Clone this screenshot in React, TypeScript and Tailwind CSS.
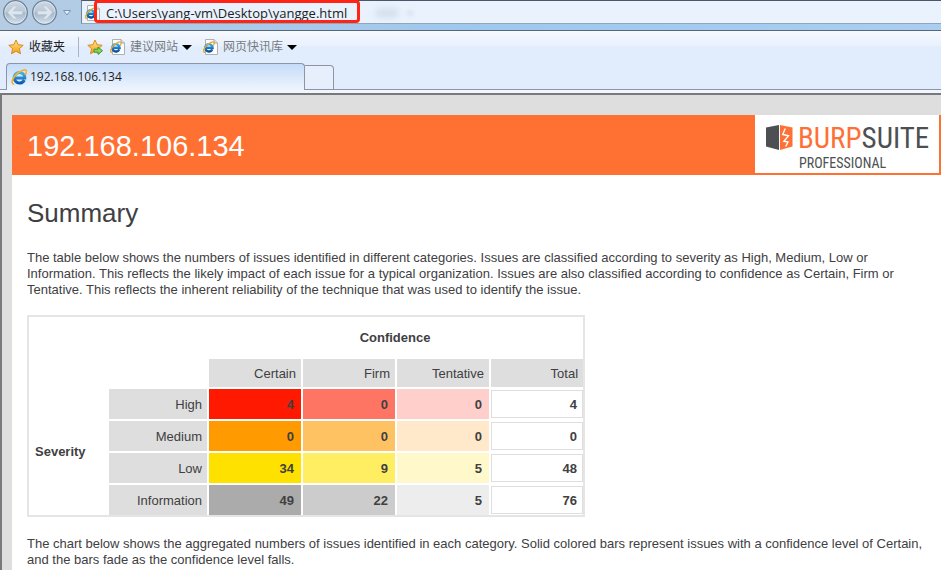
import type { ReactNode } from "react";

const ui = "font-['Open_Sans','Noto_Sans_CJK_SC',sans-serif]";

function IeGlyph({ size, id }: { size: number; id: string }) {
  return (
    <svg width={size} height={size} viewBox="0 0 16 16" aria-hidden="true" className="shrink-0">
      <defs>
        <linearGradient id={id} x1="0" y1="0" x2="0" y2="1">
          <stop offset="0" stopColor="#45b4ec" />
          <stop offset="1" stopColor="#0b5cb0" />
        </linearGradient>
      </defs>
      <path d="M13.300 11A5.300 5.300 0 1 1 13.800 9H4.500" fill="none" stroke={`url(#${id})`} strokeWidth="3" />
      <path d="M2.600 15.200C-.3 14.300 1.200 9.600 5 5.700 9 1.700 13.900-.1 15.200 1.500c.6.900.2 2.300-.6 3.900" fill="none" stroke="#f2b62e" strokeWidth="1.700" strokeLinecap="round" />
    </svg>
  );
}

function IePage({ id }: { id: string }) {
  return (
    <svg width="16" height="16" viewBox="0 0 16 16" aria-hidden="true" className="shrink-0">
      <defs>
        <linearGradient id={id} x1="0" y1="0" x2="0" y2="1">
          <stop offset="0" stopColor="#37a9e8" />
          <stop offset="1" stopColor="#0a519f" />
        </linearGradient>
      </defs>
      <path d="M2.500.5h8.500l3.500 3.500v11.500h-12z" fill="#fdfdfd" stroke="#b0b0b0" />
      <path d="M11 .5V4h3.500" fill="#ddd" stroke="#a5a5a5" />
      <path d="M9.300 10.300A3.700 3.700 0 1 1 9.600 8.700H3" fill="none" stroke={`url(#${id})`} strokeWidth="2.400" />
      <path d="M1.600 13.300C-.4 12.600.9 9 3.900 6.200 6.700 3.500 10 2.200 10.900 3.400c.4.600.1 1.700-.4 2.700" fill="none" stroke="#e9ab2b" strokeWidth="1.300" strokeLinecap="round" />
    </svg>
  );
}

function Star({ arrow = false, id }: { arrow?: boolean; id: string }) {
  return (
    <svg width="16" height="16" viewBox="0 0 16 16" aria-hidden="true" className="shrink-0">
      <defs>
        <linearGradient id={id} x1="0" y1="0" x2="0" y2="1">
          <stop offset="0" stopColor="#ffe98a" />
          <stop offset="1" stopColor="#f79a18" />
        </linearGradient>
      </defs>
      <path d="M8 1l2.100 4.700 5.100.6-3.800 3.400 1.100 5.100L8 12.200l-4.500 2.600 1.100-5.100L.8 6.300l5.100-.6z" fill={`url(#${id})`} stroke="#dc8a1c" strokeLinejoin="round" />
      {arrow && <path d="M7 10.200h4V8l4.500 3.700-4.500 3.700v-2.200H7z" fill="#8ad45c" stroke="#3a9a2b" strokeWidth="1" />}
    </svg>
  );
}

function NavButton({ label, back = false }: { label: string; back?: boolean }) {
  return (
    <button aria-label={label} className="h-[30px] w-[27px]">
      <svg width="27" height="30" viewBox="0 0 27 30" aria-hidden="true">
        <defs>
          <linearGradient id={label} x1="0" y1="0" x2="0" y2="1">
            <stop offset="0" stopColor="#cdd8e3" />
            <stop offset=".48" stopColor="#b9c8d8" />
            <stop offset=".52" stopColor="#a3b5c9" />
            <stop offset="1" stopColor="#d7e4f0" />
          </linearGradient>
        </defs>
        <circle cx="13.500" cy="12.500" r="11.800" fill={`url(#${label})`} stroke="#6e8094" strokeWidth="1.300" />
        <circle cx="13.500" cy="12.500" r="10.700" fill="none" stroke="#e8f0f8" strokeOpacity=".6" />
        <path
          d={back ? "M5.500 12.500l6-6.500h4l-4.500 5h9.500v3.500H11l4.500 4.500h-4z" : "M21.500 12.500l-6-6.500h-4l4.500 5H6.500v3.500H16l-4.500 4.500h4z"}
          fill="#dde5ed"
          stroke="#b4c2d1"
          strokeWidth=".5"
        />
      </svg>
    </button>
  );
}

function FavoriteLink({ children, id }: { children: ReactNode; id: string }) {
  return (
    <button className="flex items-center gap-1 whitespace-nowrap text-xs text-[#777b82]">
      <IePage id={id} />
      {children}
      <svg width="10" height="5" viewBox="0 0 10 5" aria-hidden="true">
        <path d="M0 0h10L5 5z" fill="#000" />
      </svg>
    </button>
  );
}

function BurpLogo() {
  return (
    <div className="mr-0.5 mb-0.5 flex w-[184px] shrink-0 items-start bg-white pt-1.5 pl-[11px]">
      <svg width="27" height="32" viewBox="0 -3 27 32" aria-hidden="true" className="shrink-0">
        <path d="M0 3.500L13 1v25L0 22.500z" fill="#4d4f53" />
        <path d="M14 1l12.500 2.500v19L14 26z" fill="#ff7036" />
        <path d="M19.300 4.500l-2.600 6 5.800 1.300-4.600 5.400 4.100.8-2.300 4.500" fill="none" stroke="#fff" strokeWidth="1.400" />
      </svg>
      <div className="ml-[5px] font-['Roboto_Condensed',sans-serif] whitespace-nowrap text-[#4d4f53]">
        <div className="text-[29px] leading-[34px]">
          <span className="text-[#ff7036]">BURP</span>SUITE
        </div>
        <div className="pl-px text-[14px] leading-4">PROFESSIONAL</div>
      </div>
    </div>
  );
}

const rows = [
  { name: "High", values: [4, 0, 0], total: 4, colors: ["bg-[#ff1900]", "bg-[#ff7563]", "bg-[#ffd0cb]"] },
  { name: "Medium", values: [0, 0, 0], total: 0, colors: ["bg-[#ff9b00]", "bg-[#ffc262]", "bg-[#ffe9ca]"] },
  { name: "Low", values: [34, 9, 5], total: 48, colors: ["bg-[#ffe100]", "bg-[#ffed62]", "bg-[#fff8ca]"] },
  { name: "Information", values: [49, 22, 5], total: 76, colors: ["bg-[#ababab]", "bg-[#cccccc]", "bg-[#ededee]"] },
];

const cell = "border-t-2 border-l-2 border-white bg-clip-padding text-right";

function IssueTable() {
  return (
    <table className="mt-[17px] w-[558px] table-fixed border-separate border-spacing-0 border-2 border-[#e5e5e5] text-[13px] leading-4">
      <colgroup>
        <col className="w-[78px]" />
        <col className="w-[100px]" />
        <col className="w-[94px]" />
        <col className="w-[94px]" />
        <col className="w-[94px]" />
        <col className="w-[94px]" />
      </colgroup>
      <thead>
        <tr className="h-10">
          <td colSpan={2} className="p-0" />
          <th colSpan={4} scope="colgroup" className="px-0 pt-0.5 pb-0 text-center font-bold">Confidence</th>
        </tr>
        <tr className="h-[30px]">
          <td colSpan={2} className="p-0" />
          {["Certain", "Firm", "Tentative", "Total"].map((h) => (
            <th key={h} scope="col" className={`${cell} bg-[#dedede] pt-0.5 pr-[5px] pb-0 font-normal`}>{h}</th>
          ))}
        </tr>
      </thead>
      <tbody>
        {rows.map((row, i) => (
          <tr key={row.name} className="h-8">
            {i === 0 && (
              <th rowSpan={4} scope="rowgroup" className="pt-0.5 pb-0 pl-1.5 text-left font-bold">Severity</th>
            )}
            <th scope="row" className={`${cell} bg-[#dedede] pt-0.5 pr-[5px] pb-0 font-normal`}>{row.name}</th>
            {row.values.map((value, j) => (
              <td key={j} className={`${cell} ${row.colors[j]} pt-0.5 pr-[7px] pb-0 font-bold`}>{value}</td>
            ))}
            <td className={`${cell} py-0 font-bold`}>
              <div className="border border-[#dedede] pt-1.5 pr-[5px] pb-1">{row.total}</div>
            </td>
          </tr>
        ))}
      </tbody>
    </table>
  );
}

export default function App() {
  return (
    <div className="flex h-screen flex-col overflow-hidden bg-white">
      <header className={`${ui} shrink-0`}>
        <div className="relative flex h-[31px] items-start border-b border-[#56677c] bg-linear-to-r from-[#b5cce3] via-[#9fc8ee] to-[#a9cef1] pl-[2px]">
          <NavButton label="Back" back />
          <span className="w-0.5" />
          <NavButton label="Forward" />
          <button aria-label="Recent pages" className="flex h-[26px] w-[17px] items-center justify-center">
            <svg width="8" height="6" viewBox="0 0 8 6" aria-hidden="true">
              <path d="M.5.5h7L4 5z" fill="#e5f0fb" stroke="#7893b1" />
            </svg>
          </button>
          <div className="ml-[6px] flex h-6 flex-1 items-center border border-r-0 border-t-[#4c566b] border-b-[#93a6b6] border-l-[#71859c] bg-[#e9f2fd] pt-px pl-[3px]">
            <IePage id="ie-address" />
            <input
              aria-label="Address"
              defaultValue="C:\Users\yang-vm\Desktop\yangge.html"
              className="ml-[5px] h-5 w-[265px] bg-transparent text-[13px] text-[#222] outline-none"
            />
            <span className="ml-1 h-2.5 w-6 rounded-full bg-[#c9d3e2] opacity-60 blur-[3px]" />
            <span className="ml-2 size-1.5 rounded-full bg-[#c9d3e2] opacity-60 blur-[2px]" />
          </div>
          <div className="pointer-events-none absolute top-0 left-[94px] h-[23px] w-[266px] rounded-sm border-3 border-[#ff2416]" />
        </div>

        <nav aria-label="Favorites" className="flex h-8 items-center bg-linear-to-b from-[#f6f9fe] from-0% via-[#e9f1fd] via-45% to-[#e1edfc] to-50% pl-2">
          <button className="flex items-center gap-[5px] text-xs whitespace-nowrap text-[#1d1d1d]">
            <Star id="star" />
            收藏夹
          </button>
          <span className="mr-2 ml-[13px] h-5 w-px bg-[#a9b3c1]" />
          <button aria-label="Add to favorites" className="mr-[7px]">
            <Star id="star-add" arrow />
          </button>
          <div className="flex gap-[11px]">
            <FavoriteLink id="ie-sites">建议网站</FavoriteLink>
            <FavoriteLink id="ie-slices">网页快讯库</FavoriteLink>
          </div>
        </nav>

        <div className="flex h-[27px] items-end bg-[#e1edfc]">
          <span className="h-px w-1.5 bg-[#8b95a5]" />
          <button className="flex h-[27px] w-[299px] items-center gap-[3px] rounded-t-sm border border-b-0 border-[#8b95a5] bg-linear-to-b from-[#c5dcf9] to-[#eef4fd] pl-1 text-xs text-[#1d1d1d]">
            <IeGlyph size={16} id="ie-tab" />
            192.168.106.134
          </button>
          <button aria-label="New tab" className="h-[25px] w-[29px] rounded-tr-sm border border-l-0 border-[#8b95a5] bg-[#e6effb]" />
          <span className="h-px flex-1 bg-[#8b95a5]" />
        </div>
        <div className="h-[3px] bg-[#f1f5fd]" />
      </header>

      <div className="min-h-0 flex-1 overflow-hidden border-t-2 border-l-2 border-[#78797d] bg-[#dedede] pt-5 pl-2.5 font-['Liberation_Sans',Arial,sans-serif] text-[#404042]">
        <main className="min-h-full bg-white">
          <div className="flex h-[60px] bg-[#ff7033]">
            <h1 className="flex flex-1 items-center pt-0.5 pl-[15px] text-[29px] leading-8 text-white">192.168.106.134</h1>
            <BurpLogo />
          </div>
          <div className="pr-4 pl-[15px] text-[13px] leading-4">
            <h2 className="pt-[22px] text-[26px] leading-8">Summary</h2>
            <p className="mt-[21px]">
              The table below shows the numbers of issues identified in different categories. Issues are classified according to severity as High, Medium, Low or Information. This reflects the likely impact of each issue for a typical organization. Issues are also classified according to confidence as Certain, Firm or Tentative. This reflects the inherent reliability of the technique that was used to identify the issue.
            </p>
            <IssueTable />
            <p className="mt-[19px]">
              The chart below shows the aggregated numbers of issues identified in each category. Solid colored bars represent issues with a confidence level of Certain, and the bars fade as the confidence level falls.
            </p>
          </div>
        </main>
      </div>
    </div>
  );
}
